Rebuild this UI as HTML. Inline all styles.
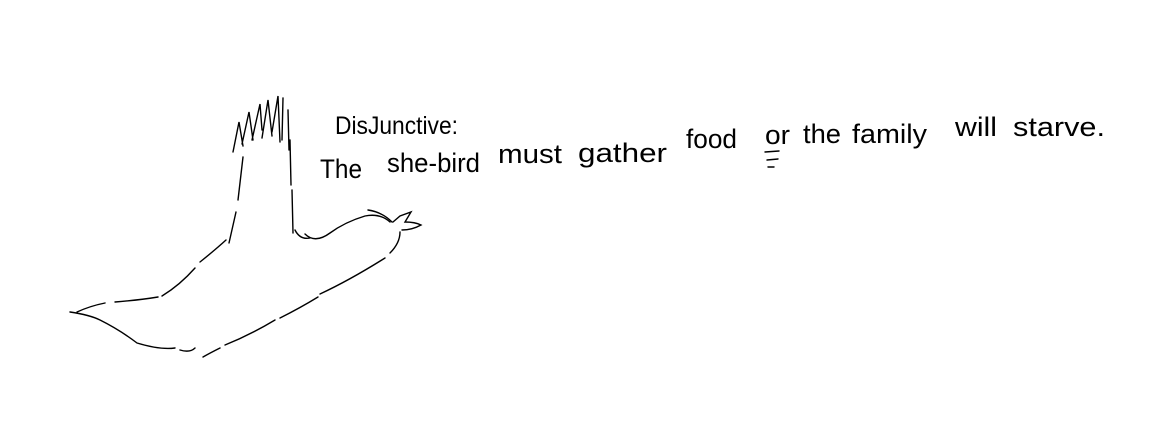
<!DOCTYPE html>
<html><head><style>html,body{margin:0;padding:0;background:#fff;width:1164px;height:433px;overflow:hidden}</style></head>
<body>
<svg width="1164" height="433" viewBox="0 0 1164 433" xmlns="http://www.w3.org/2000/svg">
<g fill="none" stroke="#000" stroke-width="1.4" stroke-linecap="round">
<path d="M233 152 L239 122 L243 146 M242 144 L249 112 L253 140 M252 140 L260 104 L262 130 M262 138 L268 100 L272 136 M272 132 L278 96 L280 142 M282 140 L283 98"/>
<path d="M288 110 L289 150"/>
<path d="M243 157 L238 200 M236 212 L229 243"/>
<path d="M290 140 L291 185 M292 190 L293 233"/>
<path d="M295 230 Q300 240 310 238 M305 234 Q315 244 330 233 Q345 222 365 216 Q380 213 390 222"/>
<path d="M368 210 Q382 212 392 222 M393 222 L400 216 L411 212 L405 222 Q415 222 421 225 Q412 230 402 230"/>
<path d="M400 232 Q400 243 390 253 M385 258 Q350 280 320 294 M318 297 Q300 308 280 318 M275 320 Q250 335 225 345 M220 348 Q210 353 203 357"/>
<path d="M70 312 Q90 315 100 320 Q120 330 137 343 Q160 350 175 348 M180 350 Q190 353 195 348"/>
<path d="M77 312 Q90 306 105 303 M115 302 Q140 300 158 297 M162 296 Q180 285 195 268 M200 262 Q215 250 226 240"/>
<path d="M765 152 L779 151 M767 160 L778 159 M768 167 L774 167"/>
</g>
<g font-family="Liberation Sans, sans-serif" font-size="27" fill="#000" font-weight="normal">
<text x="335" y="134" font-size="25" textLength="123" lengthAdjust="spacingAndGlyphs">DisJunctive:</text>
<text x="320" y="178" textLength="42" lengthAdjust="spacingAndGlyphs">The</text>
<text x="387" y="172" textLength="93" lengthAdjust="spacingAndGlyphs">she-bird</text>
<text x="498" y="163" textLength="64" lengthAdjust="spacingAndGlyphs">must</text>
<text x="578" y="162" textLength="89" lengthAdjust="spacingAndGlyphs">gather</text>
<text x="686" y="148" textLength="51" lengthAdjust="spacingAndGlyphs">food</text>
<text x="765" y="144" textLength="25" lengthAdjust="spacingAndGlyphs">or</text>
<text x="803" y="143" textLength="38" lengthAdjust="spacingAndGlyphs">the</text>
<text x="852" y="143" textLength="75" lengthAdjust="spacingAndGlyphs">family</text>
<text x="955" y="136" textLength="42" lengthAdjust="spacingAndGlyphs">will</text>
<text x="1013" y="136" textLength="92" lengthAdjust="spacingAndGlyphs">starve.</text>
</g>
</svg>
</body></html>
